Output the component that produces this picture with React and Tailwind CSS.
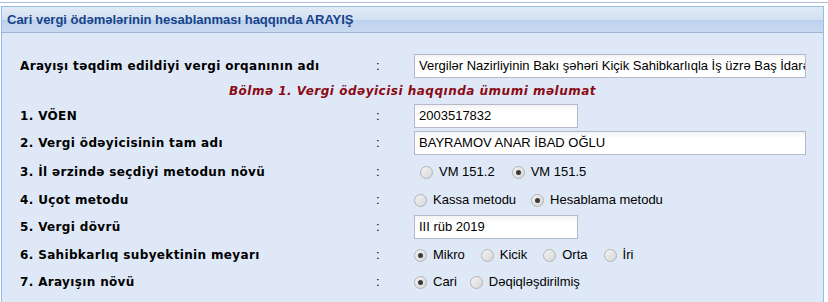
import React from "react";

function Radio({ checked, label }) {
  return (
    <label className="flex items-center gap-[6px]">
      <span className="flex h-[13px] w-[13px] items-center justify-center rounded-full border border-[#b4b4b4] bg-gradient-to-br from-[#f4f4f4] to-[#d6d6d6]">
        {checked && <span className="h-[5px] w-[5px] rounded-full bg-[#3a3a3a]" />}
      </span>
      <span className="text-[13px] text-black">{label}</span>
    </label>
  );
}

function Row({ label, h, children }) {
  return (
    <div className={`flex items-center ${h}`}>
      <div className="w-[356px] font-['DejaVu_Sans',Verdana,sans-serif] font-bold text-[12px] tracking-[0.35px] text-black">{label}</div>
      <div className="w-[38px] text-[13px] text-black">:</div>
      <div className="flex items-center">{children}</div>
    </div>
  );
}

function Field({ value, wide }) {
  return (
    <div
      className={`h-[24px] ${wide ? "w-[392px]" : "w-[164px]"} overflow-hidden whitespace-nowrap border border-[#b5b8c8] bg-white bg-gradient-to-b from-[#f3f3f3] to-white to-[30%] px-[4px] text-[13px] leading-[22px] text-black`}
    >
      {value}
    </div>
  );
}

export default function App() {
  return (
    <div className="h-[302px] w-[828px] overflow-hidden bg-white font-['Liberation_Sans',Arial,sans-serif]">
      <div className="h-[2px]" />
      <div className="h-[1px] bg-[#a9bfd6]" />
      <div className="h-[3px]" />

      <div className="ml-[1px] w-[823px] border-x border-t border-[#99bbe8]">
        {/* header */}
        <div className="h-[26px] border-b border-[#9fb5d3] bg-[linear-gradient(to_bottom,#e2ebf7_0%,#d3e0f1_50%,#bcd1eb_52%,#c8daf0_100%)] pl-[5px] text-[13px] font-bold leading-[25px] text-[#15428b]">
          Cari vergi ödəmələrinin hesablanması haqqında ARAYIŞ
        </div>

        {/* body */}
        <div className="bg-[#dfe8f6] pl-[18px] pt-[20px] pb-[10px]">
          <Row label="Arayışı təqdim edildiyi vergi orqanının adı" h="h-[26px]">
            <Field wide value="Vergilər Nazirliyinin Bakı şəhəri Kiçik Sahibkarlıqla İş üzrə Baş İdarə" />
          </Row>

          <div className="flex h-[23px] items-center justify-center pr-[18px] font-['DejaVu_Sans',Verdana,sans-serif] text-[12px] font-bold italic tracking-[0.5px] text-[#8b0a14]">
            Bölmə 1. Vergi ödəyicisi haqqında ümumi məlumat
          </div>

          <Row label="1. VÖEN" h="h-[28px]">
            <Field value="2003517832" />
          </Row>
          <Row label="2. Vergi ödəyicisinin tam adı" h="h-[26px]">
            <Field wide value="BAYRAMOV ANAR İBAD OĞLU" />
          </Row>
          <Row label="3. İl ərzində seçdiyi metodun növü" h="h-[32px]">
            <div className="flex items-center gap-[17px] pl-[6px]">
              <Radio label="VM 151.2" />
              <Radio checked label="VM 151.5" />
            </div>
          </Row>
          <Row label="4. Uçot metodu" h="h-[24px]">
            <div className="flex items-center gap-[15px]">
              <Radio label="Kassa metodu" />
              <Radio checked label="Hesablama metodu" />
            </div>
          </Row>
          <Row label="5. Vergi dövrü" h="h-[30px]">
            <Field value="III rüb 2019" />
          </Row>
          <Row label="6. Sahibkarlıq subyektinin meyarı" h="h-[26px]">
            <div className="flex items-center gap-[16px]">
              <Radio checked label="Mikro" />
              <Radio label="Kicik" />
              <Radio label="Orta" />
              <Radio label="İri" />
            </div>
          </Row>
          <Row label="7. Arayışın növü" h="h-[28px]">
            <div className="flex items-center gap-[13px]">
              <Radio checked label="Cari" />
              <Radio label="Dəqiqləşdirilmiş" />
            </div>
          </Row>
        </div>
      </div>
    </div>
  );
}
